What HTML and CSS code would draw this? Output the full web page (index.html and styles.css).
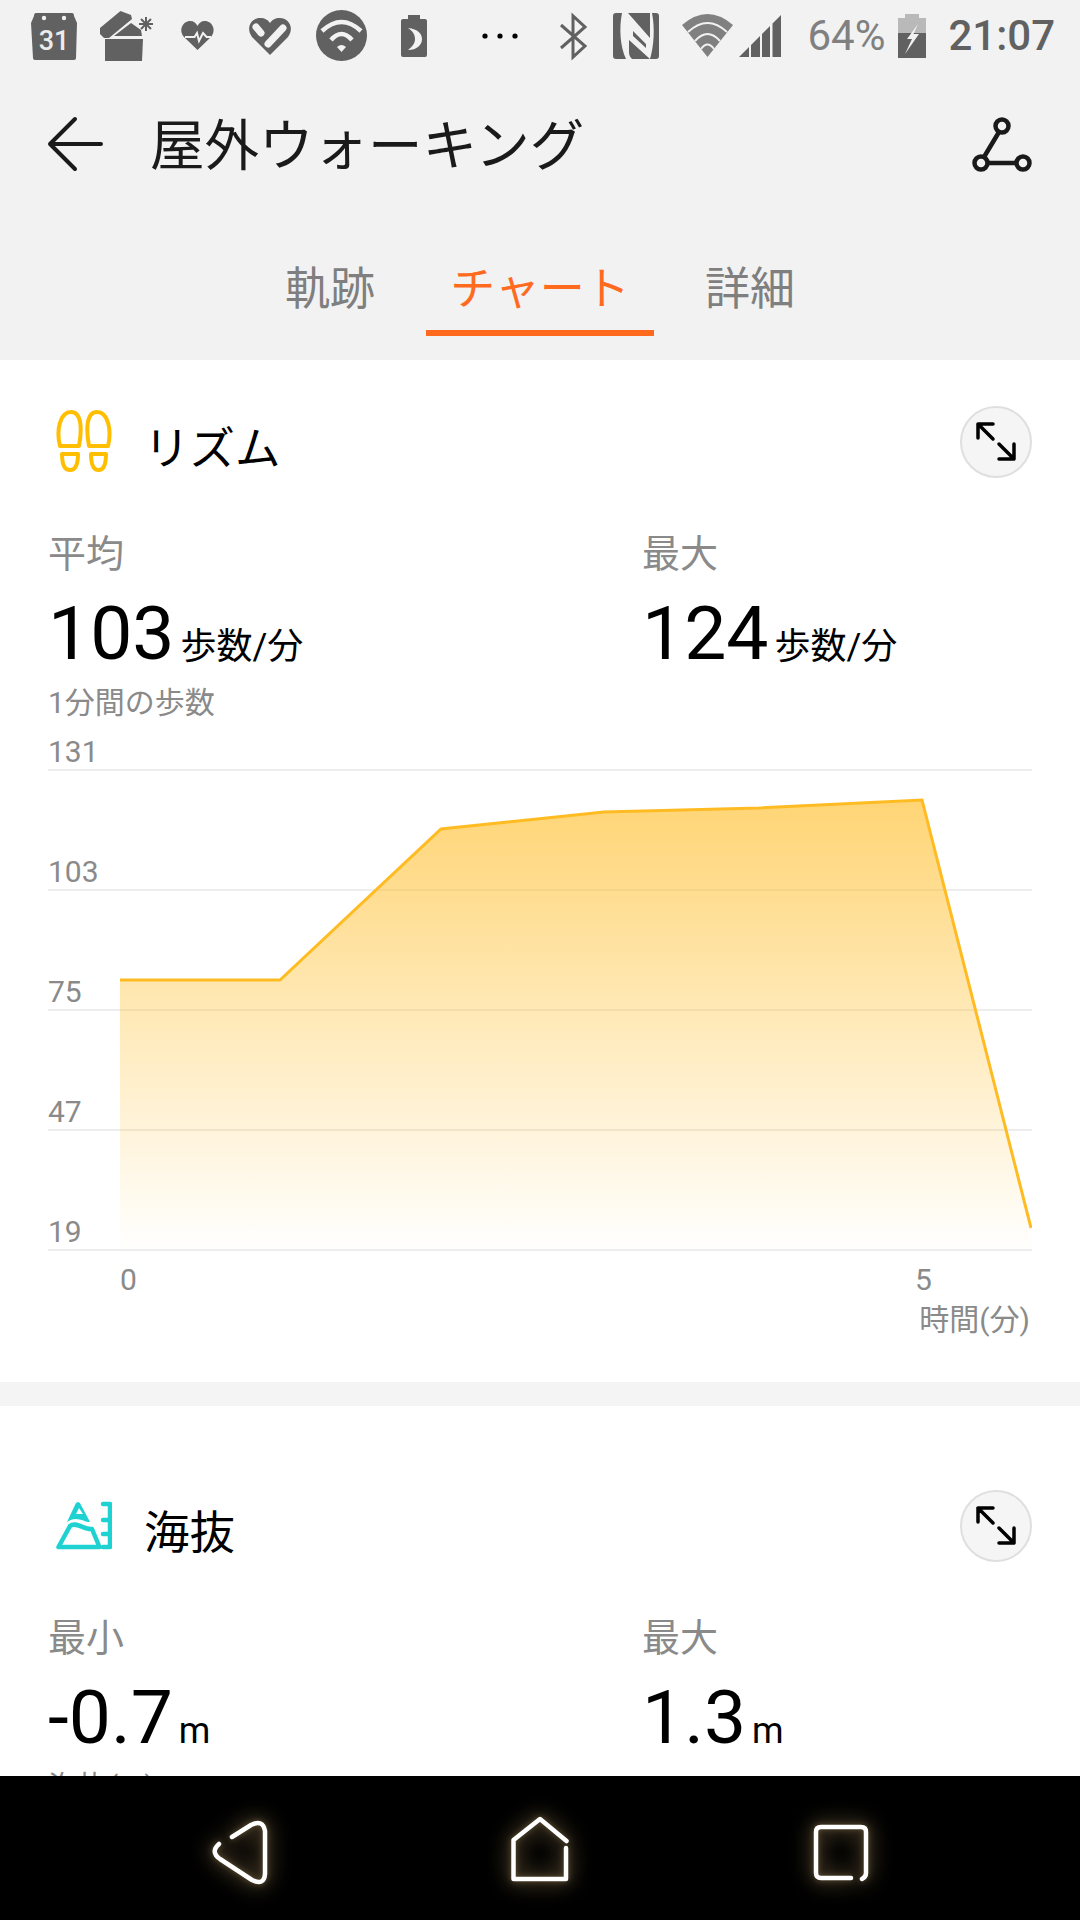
FILE: index.html
```html
<!DOCTYPE html>
<html lang="ja">
<head>
<meta charset="utf-8">
<title>屋外ウォーキング</title>
<link rel="stylesheet" href="styles.css">
</head>
<body>
<div class="app">
  <header class="status">
    <svg class="status-left" viewBox="31 0 487 72" width="487" height="72">
      <g class="g">
        <path d="M36 13H72Q74 13 74 16L77 23L76 58Q76 60 73 60H35Q33 60 33 58L31 23L34 16Q34 13 36 13Z"/>
        <circle class="k" cx="44" cy="18" r="2.2"/><circle class="k" cx="64" cy="18" r="2.2"/>
        <text class="cal" x="54" y="50" text-anchor="middle">31</text>
        <path d="M100 28L120.500 11L131 15L132 19L109 38H104L100 34Z"/>
        <path d="M131 23L141 30L142 36H114Z"/>
        <path d="M105 39H143L142 61H105Z"/>
        <path class="spark" d="M146 17V31M139 24H153M141 19L151 29M151 19L141 29"/>
        <path d="M197.500 50L184 37C178 30 183 21 190 21C194 21 196 23 197.500 26C199 23 201 21 205 21C212 21 217 30 211 37Z"/>
        <path class="pulse" d="M185 37H194.500L197 33L199 41L203 33L206.600 37H211"/>
        <path d="M270 55L252 37C245 27 252 18 260 18C265 18 268 20 270 23C272 20 275 18 280 18C288 18 295 27 288 37Z"/>
        <path class="pill" d="M256 27L261 33M283 28L268 44"/>
        <circle cx="341.500" cy="35.500" r="25.500"/>
        <path class="wave" d="M322 31Q341.500 13 361 31M331 40Q341.500 28 352 40"/>
        <path class="k" d="M337 47Q341.500 43 346 47L341.500 52Z"/>
        <path d="M408 15H420V19H425Q427 19 427 21V55Q427 57 425 57H403Q401 57 401 55V21Q401 19 403 19H408Z"/>
        <path class="k" d="M408 28C418 29 422 34 422 39C422 45 417 50 408 50C413 46 415 43 415 39C415 35 413 31 408 28Z"/>
      </g>
      <circle cx="485" cy="36" r="2.600"/><circle cx="500" cy="36" r="2.600"/><circle cx="515" cy="36" r="2.600"/>
    </svg>
    <div class="status-right">
      <svg viewBox="561 0 221 72" width="221" height="72">
        <path class="bt" d="M562 25L586 46L574 57V16L586 27L562 48"/>
        <rect class="g" x="614" y="13" width="46" height="46" rx="3"/>
        <path class="nfc-fill" d="M623 13H629L651 38V13H653C656 28 655 46 651 59L630 40V52C630 55 631 57 633 59H627C621 46 620 28 623 13ZM634 36L647 48V44L634 31Z"/>
        <path class="wifi" d="M708.500 57L683 25Q708.500 3 734 25Z"/>
        <path class="wifi-gap" d="M689 32Q708.500 14 728 32M696 41Q708.500 27 721 41M702 49Q708.500 40 715 49"/>
        <path class="g" d="M740 57L750 47V57ZM752 45L761 36V57H752ZM763 34L771 26V57H763ZM773.500 23.500L782 15V57H773.500Z"/>
      </svg>
      <span class="pct">64%</span>
      <svg class="batt" viewBox="899 0 28 72" width="28" height="72">
        <path class="batt-low" d="M906 14H920V18H927V33H899V18H906Z"/>
        <rect class="g" x="899" y="33" width="28" height="25"/>
        <path class="bolt" d="M919 24L908 39H913L906 54L920 34H914.500L919 24Z"/>
      </svg>
      <span class="time">21:07</span>
    </div>
  </header>

  <div class="titlebar">
    <svg class="back" viewBox="0 0 56 56" width="56" height="56"><path d="M54 28H3M28 3L3 28L28 53"/></svg>
    <h1 class="title">屋外ウォーキング</h1>
    <svg class="route" viewBox="0 0 60 56" width="60" height="56"><circle cx="30" cy="10" r="6.500"/><circle cx="9" cy="47" r="6.500"/><circle cx="51" cy="47" r="6.500"/><path d="M27 16L12 41M16 47H44"/></svg>
  </div>

  <nav class="tabs">
    <div class="tab">軌跡</div>
    <div class="tab active">チャート</div>
    <div class="tab">詳細</div>
  </nav>

  <main class="content">
    <section class="card rhythm">
      <div class="card-head">
        <svg class="head-icon" viewBox="56 410 56 64" width="56" height="64">
          <path class="shoe" d="M60 446C56 430 60 412 71 412C82 412 82 430 79 446ZM62 454H78C78 464 76 470 70 470C64 470 62 464 62 454Z"/>
          <path class="shoe" d="M108 446C112 430 108 412 97 412C86 412 86 430 89 446ZM106 454H91C91 464 93 470 98.500 470C104 470 106 464 106 454Z"/>
        </svg>
        <h2 class="card-title">リズム</h2>
        <svg class="expand" viewBox="0 0 72 72" width="72" height="72"><circle cx="36" cy="36" r="35"/><path d="M18 32V18H33M18 18L33 33M54 38V53H39M54 53L39 38"/></svg>
      </div>
      <div class="stats">
        <div class="stat">
          <div class="stat-label">平均</div>
          <div class="stat-value">103<span class="unit">歩数/分</span></div>
        </div>
        <div class="stat">
          <div class="stat-label">最大</div>
          <div class="stat-value">124<span class="unit">歩数/分</span></div>
        </div>
      </div>
      <div class="caption">1分間の歩数</div>
      <div class="chart">
        <div class="grid-row first"><span>131</span></div>
        <div class="grid-row"><span>103</span></div>
        <div class="grid-row"><span>75</span></div>
        <div class="grid-row"><span>47</span></div>
        <div class="grid-row"><span>19</span></div>
        <svg class="plot" viewBox="48 723 984 530" width="984" height="530">
          <defs>
            <linearGradient id="fade" x1="0" y1="800" x2="0" y2="1250" gradientUnits="userSpaceOnUse">
              <stop offset="0" stop-color="#ffbf2e" stop-opacity=".66"/>
              <stop offset="1" stop-color="#ffbf2e" stop-opacity="0"/>
            </linearGradient>
          </defs>
          <path fill="url(#fade)" d="M120 980H280L441 829L604 812L759 808L922 800L1031 1228V1250H120Z"/>
          <path class="trace" d="M120 980H280L441 829L604 812L759 808L922 800L1031 1228"/>
        </svg>
      </div>
      <div class="x-axis">
        <span>0</span><span>5</span>
      </div>
      <div class="x-title">時間(分)</div>
    </section>
    <section class="card altitude">
      <div class="card-head">
        <svg class="head-icon" viewBox="56 1501 56 50" width="56" height="50">
          <path class="mount-cap" fill-rule="evenodd" d="M78 1502Q80 1502 81 1505L90 1522C84 1522 76 1515 67 1522L75 1505Q76 1502 78 1502ZM79 1508L76 1514H83Z"/>
          <path class="mount" d="M58.500 1547H99.500L92 1529C84 1530 76 1521 70 1526ZM103 1504H110V1547H103M103 1520H110M103 1534H110"/>
        </svg>
        <h2 class="card-title">海抜</h2>
        <svg class="expand" viewBox="0 0 72 72" width="72" height="72"><circle cx="36" cy="36" r="35"/><path d="M18 32V18H33M18 18L33 33M54 38V53H39M54 53L39 38"/></svg>
      </div>
      <div class="stats">
        <div class="stat">
          <div class="stat-label">最小</div>
          <div class="stat-value">-0.7<span class="unit">m</span></div>
        </div>
        <div class="stat">
          <div class="stat-label">最大</div>
          <div class="stat-value">1.3<span class="unit">m</span></div>
        </div>
      </div>
      <div class="caption">海抜(m)</div>
    </section>
  </main>

  <footer class="navbar">
    <svg class="nav-icon" viewBox="200 1776 80 144" width="80" height="144"><path d="M232 1837L251 1825Q263 1819 265 1831V1874Q264 1886 252 1880L220 1859Q210 1852 219 1844"/></svg>
    <svg class="nav-icon" viewBox="500 1776 80 144" width="80" height="144"><path d="M566.500 1841L540 1819L513.500 1840V1879H566V1848"/></svg>
    <svg class="nav-icon" viewBox="800 1776 80 144" width="80" height="144"><path d="M851 1878H821Q816 1878 816 1873V1832Q816 1827 821 1827H861Q866 1827 866 1832V1873Q866 1877 862 1879"/></svg>
  </footer>
</div>
</body>
</html>
```

FILE: styles.css
```css
* { box-sizing: border-box; }
html, body { margin: 0; padding: 0; }
body { font-family: Roboto, "Noto Sans CJK JP", sans-serif; }
.app { width: 1080px; height: 1920px; display: flex; flex-direction: column; overflow: hidden; background: #f2f2f2; }

.status { flex: none; height: 72px; padding: 0 25px 0 31px; display: flex; justify-content: space-between; align-items: center; }
.status svg { display: block; }
.status-right { display: flex; align-items: center; }
.g { fill: #616161; }
.g .k, .k { fill: #f2f2f2; }
.g .cal { font: 500 27px Roboto, sans-serif; fill: #ececec; }
.spark { fill: none; stroke: #616161; stroke-width: 2; }
.pulse { fill: none; stroke: #f2f2f2; stroke-width: 2; }
.pill { fill: none; stroke: #f2f2f2; stroke-width: 7; stroke-linecap: round; }
.wave { fill: none; stroke: #f2f2f2; stroke-width: 4.500; }
.bt { fill: none; stroke: #616161; stroke-width: 3; }
.nfc-fill { fill: #f2f2f2; fill-rule: evenodd; }
.wifi { fill: #808080; }
.wifi-gap { fill: none; stroke: #f2f2f2; stroke-width: 2; }
.batt-low { fill: #b9b9b9; }
.bolt { fill: #f2f2f2; }
.pct { margin: 0 13px 0 26px; font-size: 42px; line-height: 72px; color: #808080; }
.time { margin-left: 22px; font-size: 42px; font-weight: 500; line-height: 72px; color: #616161; }

.titlebar { flex: none; height: 144px; padding: 0 48px 0 47px; display: flex; align-items: center; }
.back { flex: none; fill: none; stroke: #1a1a1a; stroke-width: 4; stroke-linecap: round; stroke-linejoin: round; }
.title { margin: 4px 0 0 47px; flex: 1; font-size: 54.500px; font-weight: 400; line-height: 72px; color: #1a1a1a; }
.route { flex: none; fill: none; stroke: #1a1a1a; stroke-width: 4.500; }

.tabs { flex: none; height: 144px; display: flex; justify-content: center; align-items: flex-start; gap: 26px; }
.tab { width: 228px; height: 120px; padding-top: 44px; text-align: center; font-size: 45px; line-height: 60px; color: #7f7f7f; border-bottom: 6px solid transparent; }
.tab:first-child { width: 140px; }
.tab:last-child { width: 140px; }
.tab.active { color: #ff6a1f; border-bottom-color: #ff6a1f; }

.content { flex: 1; min-height: 0; overflow: hidden; display: flex; flex-direction: column; gap: 24px; background: #f4f4f4; }
.card { flex: none; background: #fff; padding: 0 48px; }
.rhythm { height: 1022px; padding-top: 46px; }
.altitude { padding-top: 84px; }

.card-head { height: 72px; display: flex; align-items: center; }
.head-icon { flex: none; margin-left: 8px; }
.card-title { flex: 1; margin: 15px 0 0 32px; font-size: 45.500px; font-weight: 400; line-height: 60px; color: #000; }
.expand { flex: none; fill: #f5f5f5; stroke: #dfdfdf; stroke-width: 2; }
.expand path { fill: none; stroke: #000; stroke-width: 3.500; stroke-linecap: round; stroke-linejoin: round; }

.stats { margin-top: 51px; display: grid; grid-template-columns: 594px 1fr; }
.stat-label { font-size: 38px; line-height: 50px; color: #8a8a8a; }
.stat-value { margin-top: 11px; font-size: 75px; line-height: 86px; color: #000; white-space: nowrap; }
.unit { margin-left: 6px; font-size: 36px; line-height: 1; color: #000; }
.caption { margin-top: 7px; font-size: 30px; line-height: 40px; color: #8a8a8a; }

.chart { position: relative; }
.grid-row { height: 120px; display: flex; align-items: flex-end; border-bottom: 2px solid #ededed; font-size: 30px; line-height: 34px; color: #8a8a8a; }
.grid-row.first { height: 48px; }
.plot { position: absolute; left: 0; top: 0; }
.trace { fill: none; stroke: #ffbb22; stroke-width: 3; }

.x-axis { margin-top: 11px; padding-left: 72px; display: flex; gap: 778px; font-size: 30px; line-height: 36px; color: #8a8a8a; }
.x-title { margin-top: 4px; padding-right: 2px; text-align: right; font-size: 30px; line-height: 36px; color: #8a8a8a; }

.mount { fill: none; stroke: #1fd2d2; stroke-width: 4.500; stroke-linejoin: round; stroke-linecap: round; }
.mount-cap { fill: #1fd2d2; }
.shoe { fill: none; stroke: #ffbf00; stroke-width: 4; stroke-linejoin: round; }

.navbar { flex: none; height: 144px; background: #000; display: grid; grid-template-columns: 200px 80px 220px 80px 220px 80px; }
.navbar .nav-icon:first-child { grid-column: 2; }
.navbar .nav-icon:nth-child(2) { grid-column: 4; }
.navbar .nav-icon:nth-child(3) { grid-column: 6; }
.nav-icon { display: block; fill: none; stroke: #fff; stroke-width: 4.500; stroke-linejoin: round; stroke-linecap: round; filter: drop-shadow(0 0 11px rgba(255, 214, 140, .55)) drop-shadow(0 0 3px rgba(255, 214, 140, .35)); }
```
